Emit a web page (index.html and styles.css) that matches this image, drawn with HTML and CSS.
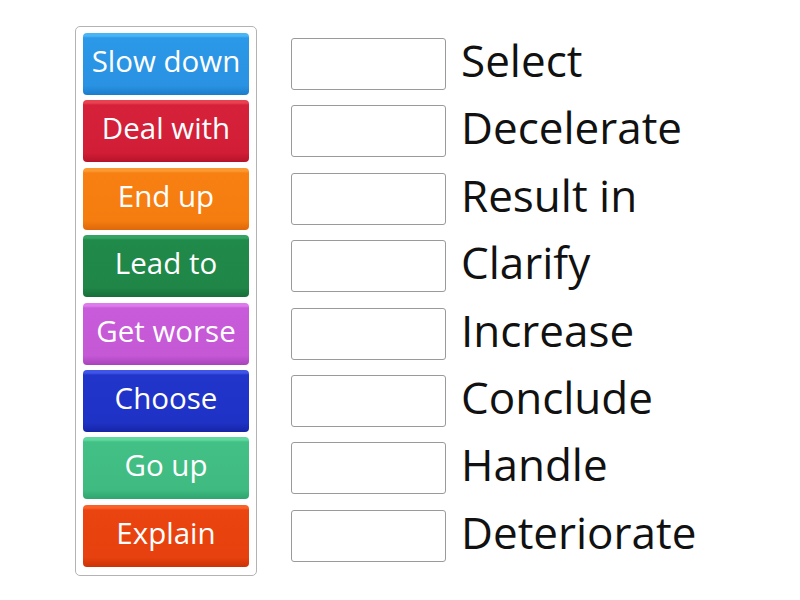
FILE: index.html
```html
<!DOCTYPE html>
<html>
<head>
<meta charset="utf-8">
<link rel="stylesheet" href="styles.css">
</head>
<body>
<div class="page">
  <div class="panel">
    <div class="tile blue">Slow down</div>
    <div class="tile red">Deal with</div>
    <div class="tile orange">End up</div>
    <div class="tile green">Lead to</div>
    <div class="tile purple">Get worse</div>
    <div class="tile navy">Choose</div>
    <div class="tile mint">Go up</div>
    <div class="tile flame">Explain</div>
  </div>
  <div class="targets">
    <div class="row"><div class="slot"></div><div class="label">Select</div></div>
    <div class="row"><div class="slot"></div><div class="label">Decelerate</div></div>
    <div class="row"><div class="slot"></div><div class="label">Result in</div></div>
    <div class="row"><div class="slot"></div><div class="label">Clarify</div></div>
    <div class="row"><div class="slot"></div><div class="label">Increase</div></div>
    <div class="row"><div class="slot"></div><div class="label">Conclude</div></div>
    <div class="row"><div class="slot"></div><div class="label">Handle</div></div>
    <div class="row"><div class="slot"></div><div class="label">Deteriorate</div></div>
  </div>
</div>
</body>
</html>
```
FILE: styles.css
```css
html, body {
  margin: 0;
  padding: 0;
  background: #ffffff;
}
.page {
  display: flex;
  align-items: flex-start;
  padding: 26px 0 0 75px;
  font-family: "Open Sans", Lato, sans-serif;
}
.panel {
  display: flex;
  flex-direction: column;
  gap: 5.4px;
  width: 166px;
  padding: 6px 7px 8px 7px;
  border: 1px solid #b3b3b3;
  border-radius: 5px;
}
.tile {
  height: 62px;
  box-sizing: border-box;
  border-radius: 4px;
  color: #ffffff;
  font-size: 29.5px;
  display: flex;
  align-items: center;
  justify-content: center;
  padding-bottom: 7px;
  white-space: nowrap;
}
.blue   { background: linear-gradient(#4ab5f5 0, #4ab5f5 3px, #2b98e8 5px, #2a92e2 85%, #1b7dcc 100%); }
.red    { background: linear-gradient(#e8414f 0, #e8414f 3px, #d6213a 5px, #d11e36 85%, #b5132a 100%); }
.orange { background: linear-gradient(#fb9a33 0, #fb9a33 3px, #f88013 5px, #f57d10 85%, #de680a 100%); }
.green  { background: linear-gradient(#35a463 0, #35a463 3px, #208a4a 5px, #1f8647 85%, #166e39 100%); }
.purple { background: linear-gradient(#dd7aec 0, #dd7aec 3px, #c85bd9 5px, #c458d5 85%, #a843bb 100%); }
.navy   { background: linear-gradient(#3f55e8 0, #3f55e8 3px, #2135cb 5px, #1f32c6 85%, #1524a6 100%); }
.mint   { background: linear-gradient(#5fd9a0 0, #5fd9a0 3px, #43c086 5px, #3fbb82 85%, #2ea56e 100%); }
.flame  { background: linear-gradient(#fa6128 0, #fa6128 3px, #ea4410 5px, #e6410e 85%, #cc3207 100%); }

.targets {
  display: flex;
  flex-direction: column;
  gap: 5.4px;
  margin-left: 34px;
  padding-top: 7px;
}
.row {
  height: 62px;
  display: flex;
  align-items: center;
}
.slot {
  width: 155px;
  height: 52px;
  box-sizing: border-box;
  border: 1px solid #9a9a9a;
  border-radius: 3px;
  background: #ffffff;
}
.label {
  margin-left: 15px;
  font-size: 44px;
  color: #111111;
  padding-bottom: 8px;
  white-space: nowrap;
}
```
